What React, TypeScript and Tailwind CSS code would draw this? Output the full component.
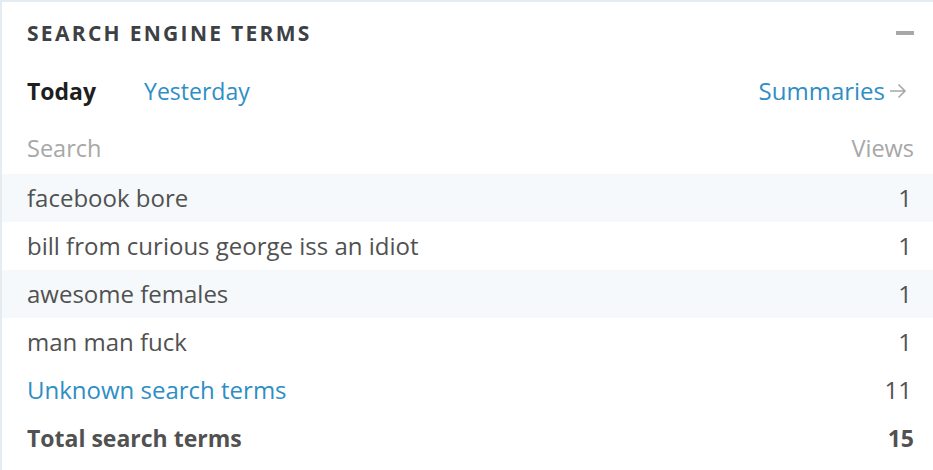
import React from "react";

const rows = [
  { term: "facebook bore", views: "1" },
  { term: "bill from curious george iss an idiot", views: "1" },
  { term: "awesome females", views: "1" },
  { term: "man man fuck", views: "1" },
];

export default function App() {
  return (
    <div
      className="w-[933px] h-[470px] bg-white overflow-hidden"
      style={{ fontFamily: '"Open Sans", sans-serif' }}
    >
      <div className="h-full border-l-2 border-t-2 border-[#e4ebf1] bg-white">
        <div className="flex items-center justify-between pl-[25px] pr-[19px] h-[62px]">
          <h2 className="text-[21px] font-bold tracking-[2.3px] text-[#3d4144] leading-none">
            SEARCH ENGINE TERMS
          </h2>
          <div className="w-[18px] h-[4px] bg-[#a8a8a8]" />
        </div>
        <div className="flex items-center justify-between pl-[25px] pr-[26px] h-[54px]">
          <div className="flex items-center gap-[48px] text-[23px]">
            <span className="font-bold text-[#1e1e1e]">Today</span>
            <span className="text-[#2e8ec5]">Yesterday</span>
          </div>
          <div className="flex items-center gap-[4px] text-[24px] text-[#2e8ec5]">
            <span>Summaries</span>
            <svg width="18" height="18" viewBox="0 0 18 18" fill="none" stroke="#a8a8a8" strokeWidth="1.6">
              <path d="M1 9h15M9.5 2.5L16 9l-6.5 6.5" />
            </svg>
          </div>
        </div>
        <div className="flex items-center justify-between pl-[25px] pr-[19px] pt-[6px] h-[56px] text-[23.5px] text-[#a7a7a7]">
          <span>Search</span>
          <span>Views</span>
        </div>
        <div className="text-[24px] text-[#515151]">
          {rows.map((r, i) => (
            <div
              key={i}
              className={`flex items-center justify-between pl-[25px] pr-[21px] h-[48px] ${
                i % 2 === 0 ? "bg-[#f6f9fb]" : "bg-white"
              }`}
            >
              <span>{r.term}</span>
              <span>{r.views}</span>
            </div>
          ))}
          <div className="flex items-center justify-between pl-[25px] pr-[21px] h-[48px] bg-white">
            <span className="text-[#2e8ec5]">Unknown search terms</span>
            <span>11</span>
          </div>
          <div className="flex items-center justify-between pl-[25px] pr-[19px] h-[48px] bg-white font-bold text-[23px]">
            <span>Total search terms</span>
            <span>15</span>
          </div>
        </div>
      </div>
    </div>
  );
}
